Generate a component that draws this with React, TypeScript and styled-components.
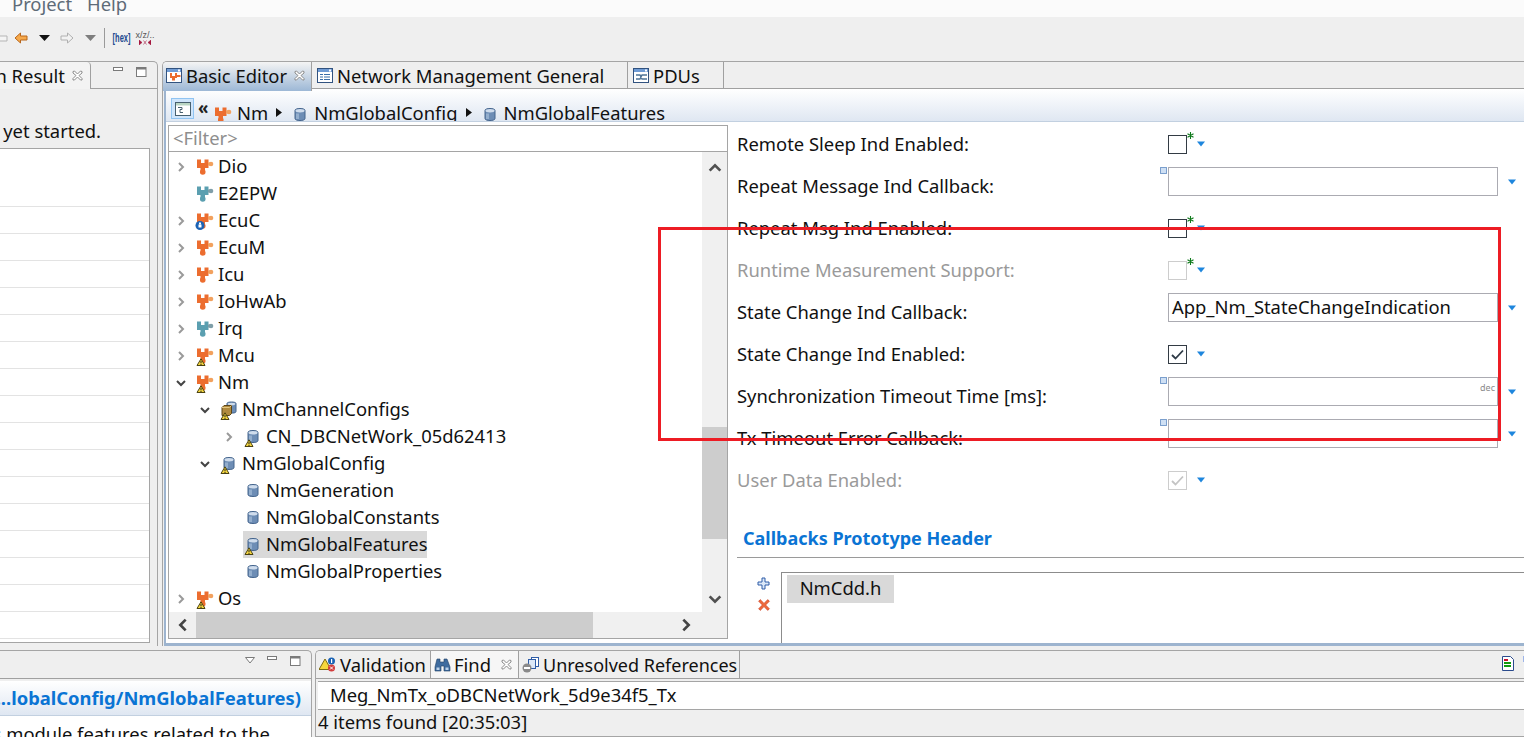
import React from "react";
import styled, { createGlobalStyle } from "styled-components";

const GlobalStyle = createGlobalStyle`
  html, body { margin: 0; padding: 0; height: 100%; overflow: hidden; }
  body { font-family: "Noto Sans", "Open Sans", sans-serif; font-size: 18.4px; color: #111; background: #efefef; }
  * { box-sizing: border-box; }
`;

type Badge = "warn" | "info" | undefined;

function WarnBadge() {
  return (
    <g>
      <path d="M6 12.800 L10 19.500 H2 Z" fill="#f5d63d" stroke="#4a4210" strokeWidth="1" strokeLinejoin="round" />
      <rect x="5.500" y="15" width="1" height="2.300" fill="#222" />
      <rect x="5.500" y="18" width="1" height="1" fill="#222" />
    </g>
  );
}

function PuzzleIcon({ tone = "orange", badge }: { tone?: "orange" | "teal"; badge?: Badge }) {
  const main = tone === "orange" ? "#ec6d2f" : "#5b9fb0";
  const side = tone === "orange" ? "#f2a15e" : "#7f9ea8";
  return (
    <svg width="20" height="20" viewBox="0 0 20 20">
      <path d="M2 2.500h4V6h3.500V2.500h4V11H10v3H5.500v-3H2z" fill={main} />
      <circle cx="7.750" cy="15" r="2.800" fill={main} />
      <rect x="13" y="5.500" width="3" height="3" fill={side} />
      <circle cx="16" cy="7" r="2.300" fill={side} />
      {badge === "warn" && <WarnBadge />}
      {badge === "info" && (
        <g>
          <circle cx="5" cy="14.500" r="4.500" fill="#1b63b5" />
          <rect x="3.500" y="13.500" width="3" height="3" fill="#fff" />
          <rect x="4" y="11.500" width="2" height="2" fill="#fff" />
        </g>
      )}
    </svg>
  );
}

function CylinderIcon({ badge }: { badge?: Badge }) {
  return (
    <svg width="20" height="20" viewBox="0 0 20 20">
      <path d="M5 5.500c0-1.500 2.500-2 5-2s5 .5 5 2v8c0 1.500-2.500 2-5 2s-5-.5-5-2z" fill="#6d8db5" stroke="#44648c" strokeWidth="1" />
      <ellipse cx="10" cy="5.800" rx="4.500" ry="1.700" fill="#cfdcec" />
      <rect x="6" y="8.500" width="3" height="5.500" fill="#93aecd" />
      {badge === "warn" && <WarnBadge />}
    </svg>
  );
}

function StackIcon() {
  return (
    <svg width="20" height="20" viewBox="0 0 20 20">
      <path d="M8 3.500c0-1 2-1.500 4.500-1.500S17 2.500 17 3.500v8c0 1-1.500 1.500-3 1.500H8z" fill="#6d8db5" stroke="#44648c" />
      <ellipse cx="12.500" cy="4" rx="3.800" ry="1.300" fill="#cfdcec" />
      <path d="M3 7.500l2-2h7.500v8l-2 2H3z" fill="#b08a3e" stroke="#5c4618" />
      <path d="M3 7.500h7.500l2-2" fill="none" stroke="#e3c781" />
      <WarnBadge />
    </svg>
  );
}

function EditorTabIcon({ variant }: { variant: "puzzle" | "list" | "pdu" }) {
  return (
    <svg width="17" height="17" viewBox="0 0 17 17">
      <rect x="0.500" y="1.500" width="15" height="14" fill="#fff" stroke="#31527f" />
      <rect x="1" y="2" width="14" height="3" fill="#6f9bd4" />
      <rect x="12" y="2.500" width="2" height="2" fill="#fff" />
      {variant === "puzzle" && (
        <path d="M4 6h2v3h3V6h2v5H9v2.500H6V11H4zM11 8h3.500v2H11z" fill="#ec6d2f" />
      )}
      {variant === "list" && (
        <path d="M3 7h3v1H3zM7 7h6v1H7zM3 9.500h3v1H3zM7 9.500h6v1H7zM3 12h3v1H3zM7 12h6v1H7z" fill="#3a6ea8" />
      )}
      {variant === "pdu" && (
        <path d="M3 8h4l2 4h5M3 12h4l2-4h5" fill="none" stroke="#4f7497" strokeWidth="1.400" />
      )}
    </svg>
  );
}

function CloseX() {
  return (
    <svg width="11" height="11" viewBox="0 0 11 11">
      <path d="M1 1.500L2.500 1 5.500 4 8.500 1 10 1.500v1.500L7 5.500l3 3V10H8.500l-3-3-3 3H1V8.500l3-3-3-2.500z" fill="#fff" stroke="#8a8a8a" />
    </svg>
  );
}

function Chevron({ dir, color = "#8a8a8a", size = 12 }: { dir: "right" | "down" | "up" | "left"; color?: string; size?: number }) {
  const d = {
    right: "M4 2l4 4-4 4",
    left: "M8 2L4 6l4 4",
    down: "M2 4l4 4 4-4",
    up: "M2 8l4-4 4 4",
  }[dir];
  return (
    <svg width={size} height={size} viewBox="0 0 12 12">
      <path d={d} fill="none" stroke={color} strokeWidth="2" />
    </svg>
  );
}

function Caret() {
  return (
    <svg width="8" height="6" viewBox="0 0 8 6">
      <path d="M0 0.500h8L4 5.500z" fill="#1e86dd" />
    </svg>
  );
}

function WindowButtons() {
  return (
    <>
      <svg width="11" height="6" viewBox="0 0 11 6"><rect x="0.500" y="0.500" width="9" height="3" fill="#fff" stroke="#7a7a7a" /></svg>
      <svg width="11" height="11" viewBox="0 0 11 11"><rect x="0.500" y="0.500" width="9.500" height="9" fill="#fff" stroke="#7a7a7a" /><rect x="0.500" y="0.500" width="9.500" height="2" fill="#7a7a7a" /></svg>
    </>
  );
}

const Page = styled.div`
  position: relative;
  width: 1524px;
  height: 737px;
  display: flex;
  flex-direction: column;
  overflow: hidden;
  background: #efefef;
`;

const MenuBar = styled.div`
  height: 17px;
  flex: none;
  background: #fbfbfb;
  display: flex;
  align-items: flex-end;
  gap: 15px;
  padding: 0 0 1px 12px;
  overflow: hidden;
  color: #5e6b78;
  line-height: 24px;
`;

const Toolbar = styled.div`
  height: 44px;
  flex: none;
  display: flex;
  align-items: center;
  padding: 0 0 2px 0;
  margin-left: -12px;
`;

const ToolSlot = styled.div<{ $w: number }>`
  width: ${(p) => p.$w}px;
  flex: none;
  display: flex;
  justify-content: center;
  align-items: center;
`;

const ToolSep = styled.div`
  width: 1px;
  height: 20px;
  background: #9a9a9a;
  margin: 0 8px 0 -1px;
`;

const HexMark = styled.span`
  font-family: "Liberation Sans", sans-serif;
  font-size: 7.500px;
  font-weight: 700;
  color: #1c4a8f;
  white-space: nowrap;
  transform: scaleY(1.600);
`;

const XzMark = styled.span`
  display: flex;
  flex-direction: column;
  align-items: center;
  gap: 1px;
  font-family: "Liberation Sans", sans-serif;
  font-size: 9px;
  line-height: 8px;
  color: #555;
  white-space: nowrap;
`;

const MainRow = styled.div`
  height: 585px;
  flex: none;
  display: flex;
  gap: 4px;
  margin-bottom: 4px;
`;

const ResultPanel = styled.section`
  width: 158px;
  flex: none;
  border-top: 1px solid #a5a5a5;
  border-right: 1px solid #a5a5a5;
  border-top-right-radius: 5px;
  display: flex;
  flex-direction: column;
  overflow: hidden;
`;

const TabRow = styled.div<{ $h?: number }>`
  height: ${(p) => p.$h ?? 27}px;
  flex: none;
  display: flex;
  align-items: stretch;
  border-bottom: 1px solid #a0a0a0;
`;

const ClippedTab = styled.div`
  width: 91px;
  flex: none;
  margin-bottom: -1px;
  display: flex;
  justify-content: flex-end;
  align-items: center;
  gap: 7px;
  padding-right: 7px;
  overflow: hidden;
  white-space: nowrap;
  border-right: 1px solid #a0a0a0;
  background: #f3f3f3;
  border-top-right-radius: 4px;
  & > * { flex: none; }
`;

const TabActions = styled.div<{ $gap?: number; $right?: number }>`
  margin-left: auto;
  display: flex;
  align-items: flex-start;
  gap: ${(p) => p.$gap ?? 12}px;
  padding: 5px ${(p) => p.$right ?? 10}px 0 0;
`;

const MenuTriangle = styled.svg`
  margin-right: -2px;
  margin-top: 1px;
`;

const ClippedLine = styled.div`
  height: 59px;
  flex: none;
  display: flex;
  justify-content: flex-end;
  align-items: flex-start;
  padding: 29px 56px 0 0;
  overflow: hidden;
  white-space: nowrap;
`;

const ResultTable = styled.div`
  flex: 1;
  width: 150px;
  margin-bottom: 3px;
  background: #fff;
  border: solid #a5a5a5;
  border-width: 1px 1px 1px 0;
  overflow: hidden;
`;

const ResultHeader = styled.div`
  height: 58px;
  border-bottom: 1px solid #e3e3e3;
`;

const ResultLine = styled.div`
  height: 27px;
  border-bottom: 1px solid #e3e3e3;
`;

const Editor = styled.section`
  flex: 1;
  min-width: 0;
  border-top: 1px solid #a5a5a5;
  border-left: 1px solid #a5a5a5;
  border-top-left-radius: 5px;
  display: flex;
  flex-direction: column;
  overflow: hidden;
`;

const EditorTab = styled.div<{ $w: number; $active?: boolean }>`
  width: ${(p) => p.$w}px;
  flex: none;
  display: flex;
  align-items: center;
  gap: 3px;
  padding-left: ${(p) => (p.$active ? 3 : 5)}px;
  padding-bottom: ${(p) => (p.$active ? 3 : 0)}px;
  margin-bottom: ${(p) => (p.$active ? -3 : 0)}px;
  position: relative;
  z-index: ${(p) => (p.$active ? 1 : 0)};
  white-space: nowrap;
  border-right: 1px solid #a0a0a0;
  background: ${(p) => (p.$active ? "linear-gradient(#f4f4f4, #9db8d6)" : "#efefef")};
  & span + svg { margin-left: 4px; }
`;

const EditorBody = styled.div`
  flex: 1;
  min-height: 0;
  border-left: 2px solid #9db4cf;
  border-bottom: 3px solid #9db4cf;
  display: flex;
  flex-direction: column;
  background: #fff;
  overflow: hidden;
  margin-left: 1px;
`;

const Breadcrumb = styled.div`
  height: 33px;
  flex: none;
  display: flex;
  align-items: flex-start;
  padding: 9px 0 0 5px;
  overflow: hidden;
  white-space: nowrap;
  background: linear-gradient(#ffffff, #dfe7f2);
  border-bottom: 1px solid #c2d0e0;
  line-height: 30px;
`;

const ViewToggle = styled.div`
  width: 23px;
  height: 21px;
  flex: none;
  display: flex;
  align-items: center;
  justify-content: center;
  background: #cfe5fb;
  border: 1px solid #90c4f2;
`;

const CrumbChevrons = styled.span`
  width: 19px;
  flex: none;
  font-size: 17px;
  line-height: 20px;
  padding-left: 4px;
  font-weight: 700;
  color: #222;
`;

const CrumbIcon = styled.span`
  width: 20px;
  height: 20px;
  margin: 5px 4px 0 0;
  flex: none;
`;

const CrumbSep = styled.span`
  width: 22px;
  flex: none;
  display: flex;
  justify-content: center;
  margin-top: 10px;
  & svg { display: block; }
`;

const Content = styled.div`
  flex: 1;
  min-height: 0;
  display: flex;
  overflow: hidden;
`;

const TreePane = styled.div`
  width: 560px;
  flex: none;
  margin: 3px 0 4px 2px;
  display: flex;
  flex-direction: column;
  border: 1px solid #a5a5a5;
`;

const FilterBox = styled.div`
  height: 26px;
  flex: none;
  padding: 0 0 2px 4px;
  display: flex;
  align-items: center;
  color: #8e8e8e;
  border-bottom: 1px solid #a5a5a5;
`;

const TreeMiddle = styled.div`
  flex: 1;
  min-height: 0;
  display: flex;
`;

const TreeList = styled.div`
  flex: 1;
  min-width: 0;
  overflow: hidden;
  padding-top: 1px;
`;

const TreeRow = styled.div<{ $level: number }>`
  height: 27px;
  display: flex;
  align-items: center;
  padding-left: ${(p) => 3 + p.$level * 24}px;
`;

const Twisty = styled.span`
  width: 23px;
  flex: none;
  display: flex;
  justify-content: flex-start;
  padding-left: 3px;
`;

const NodeLabel = styled.span<{ $selected?: boolean }>`
  height: 27px;
  display: flex;
  align-items: center;
  gap: 3px;
  white-space: nowrap;
  background: ${(p) => (p.$selected ? "#d9d9d9" : "transparent")};
  & svg { flex: none; }
  & span { margin-bottom: 2px; }
`;

const VScroll = styled.div`
  width: 25px;
  flex: none;
  background: #f0f0f0;
  display: flex;
  flex-direction: column;
  align-items: center;
  padding-top: 8px;
`;

const VThumb = styled.div`
  width: 25px;
  height: 112px;
  margin-top: 251px;
  background: #cdcdcd;
`;

const VEnd = styled.div`
  display: flex;
  margin-top: auto;
  margin-bottom: 5px;
`;

const HScroll = styled.div`
  height: 26px;
  flex: none;
  padding-right: 28px;
  background: #f0f0f0;
  display: flex;
  align-items: center;
`;

const HEnd = styled.div<{ $push?: boolean }>`
  width: 27px;
  flex: none;
  display: flex;
  justify-content: center;
  margin-left: ${(p) => (p.$push ? "auto" : "0")};
`;

const HThumb = styled.div`
  width: 397px;
  height: 100%;
  background: #cdcdcd;
`;

const Form = styled.div`
  flex: 1;
  min-width: 0;
  padding: 1px 0 0 9px;
`;

const FormRow = styled.div`
  height: 42px;
  display: flex;
  align-items: center;
  position: relative;
`;

const FieldLabel = styled.label<{ $muted?: boolean }>`
  width: 431px;
  flex: none;
  margin-bottom: 2px;
  white-space: nowrap;
  color: ${(p) => (p.$muted ? "#9a9a9a" : "#111")};
`;

const CheckBox = styled.span<{ $muted?: boolean }>`
  width: 19px;
  height: 19px;
  flex: none;
  display: flex;
  align-items: center;
  justify-content: center;
  border: 1px solid ${(p) => (p.$muted ? "#cdcdcd" : "#333b44")};
  background: #fff;
`;

const Star = styled.svg`
  position: absolute;
  left: 450px;
  top: 9px;
`;

const CheckCaret = styled.span`
  margin-left: 10px;
  display: flex;
`;

const TextField = styled.div`
  width: 330px;
  height: 29px;
  flex: none;
  margin-bottom: 9px;
  padding: 0 0 2px 3px;
  display: flex;
  align-items: center;
  justify-content: space-between;
  border: 1px solid #ababb2;
  background: #fff;
  white-space: nowrap;
`;

const DecTag = styled.span`
  align-self: flex-start;
  font-size: 9px;
  line-height: 20px;
  color: #8a8a8a;
  padding-right: 2px;
`;

const FieldCaret = styled.span`
  margin: 0 0 9px 10px;
  display: flex;
`;

const FieldMarker = styled.svg`
  position: absolute;
  left: 423px;
  top: 2px;
`;

const SectionTitle = styled.h3`
  margin: 25px 0 0;
  padding: 0 0 5px 6px;
  height: 32px;
  font-size: 18px;
  line-height: 24px;
  font-weight: 700;
  color: #0a74d4;
  border-bottom: 1px solid #9a9a9a;
`;

const HeaderList = styled.div`
  margin-top: 14px;
  display: flex;
`;

const ListTools = styled.div`
  width: 44px;
  flex: none;
  padding: 5px 0 0 10px;
  display: flex;
  flex-direction: column;
  align-items: flex-start;
  gap: 8px;
  & svg { margin-left: 10px; }
`;

const ListBox = styled.div`
  flex: 1;
  height: 90px;
  padding: 2px 5px;
  border: 1px solid #8c8c8c;
  border-right: 0;
  background: #fff;
`;

const ListItem = styled.div`
  width: 107px;
  height: 28px;
  padding-bottom: 3px;
  display: flex;
  align-items: center;
  justify-content: center;
  background: #d9d9d9;
`;

const BottomRow = styled.div`
  flex: 1;
  min-height: 0;
  display: flex;
  gap: 3px;
`;

const DescPanel = styled.section`
  width: 312px;
  flex: none;
  border-top: 1px solid #a5a5a5;
  border-right: 1px solid #a5a5a5;
  border-top-right-radius: 5px;
  display: flex;
  flex-direction: column;
  overflow: hidden;
`;

const DescTitle = styled.div`
  height: 35px;
  flex: none;
  margin-top: 2px;
  padding: 0 10px 2px 0;
  display: flex;
  justify-content: flex-end;
  align-items: center;
  overflow: hidden;
  white-space: nowrap;
  font-weight: 700;
  color: #0a74d4;
  background: linear-gradient(#ffffff, #dfe7f2);
  border-bottom: 1px solid #c2d0e0;
`;

const DescText = styled.div`
  flex: 1;
  display: flex;
  justify-content: flex-end;
  padding: 5px 41px 0 0;
  overflow: hidden;
  white-space: nowrap;
  background: #fff;
`;

const FindPanel = styled.section`
  flex: 1;
  min-width: 0;
  border-top: 1px solid #a5a5a5;
  border-left: 1px solid #a5a5a5;
  border-top-left-radius: 5px;
  display: flex;
  flex-direction: column;
  overflow: hidden;
`;

const ViewTab = styled.div<{ $w: number; $active?: boolean; $size?: number }>`
  width: ${(p) => p.$w}px;
  flex: none;
  display: flex;
  align-items: center;
  gap: 3px;
  padding-left: 3px;
  white-space: nowrap;
  font-size: ${(p) => p.$size ?? 18.4}px;
  border-right: 1px solid #a0a0a0;
  background: ${(p) => (p.$active ? "#f6f6f6" : "#efefef")};
  & span + svg { margin-left: 7px; }
`;

const SearchText = styled.div`
  height: 29px;
  flex: none;
  margin: 2px 0 0 2px;
  padding: 0 0 3px 12px;
  display: flex;
  align-items: center;
  background: #fff;
  border-top: 1px solid #a5a5a5;
  border-bottom: 1px solid #a5a5a5;
`;

const FoundText = styled.div`
  height: 27px;
  flex: none;
  padding: 0 0 3px 2px;
  display: flex;
  align-items: center;
  border-bottom: 1px solid #a5a5a5;
`;

const RedFrame = styled.div`
  position: absolute;
  left: 658px;
  top: 227px;
  width: 843px;
  height: 214px;
  border: 3px solid #ed1c24;
  pointer-events: none;
`;

type Node = {
  label: string;
  level: number;
  twisty?: "right" | "down";
  icon: React.ReactNode;
  selected?: boolean;
};

const nodes: Node[] = [
  { label: "Dio", level: 0, twisty: "right", icon: <PuzzleIcon /> },
  { label: "E2EPW", level: 0, icon: <PuzzleIcon tone="teal" /> },
  { label: "EcuC", level: 0, twisty: "right", icon: <PuzzleIcon badge="info" /> },
  { label: "EcuM", level: 0, twisty: "right", icon: <PuzzleIcon /> },
  { label: "Icu", level: 0, twisty: "right", icon: <PuzzleIcon /> },
  { label: "IoHwAb", level: 0, twisty: "right", icon: <PuzzleIcon /> },
  { label: "Irq", level: 0, twisty: "right", icon: <PuzzleIcon tone="teal" /> },
  { label: "Mcu", level: 0, twisty: "right", icon: <PuzzleIcon badge="warn" /> },
  { label: "Nm", level: 0, twisty: "down", icon: <PuzzleIcon badge="warn" /> },
  { label: "NmChannelConfigs", level: 1, twisty: "down", icon: <StackIcon /> },
  { label: "CN_DBCNetWork_05d62413", level: 2, twisty: "right", icon: <CylinderIcon badge="warn" /> },
  { label: "NmGlobalConfig", level: 1, twisty: "down", icon: <CylinderIcon badge="warn" /> },
  { label: "NmGeneration", level: 2, icon: <CylinderIcon /> },
  { label: "NmGlobalConstants", level: 2, icon: <CylinderIcon /> },
  { label: "NmGlobalFeatures", level: 2, icon: <CylinderIcon badge="warn" />, selected: true },
  { label: "NmGlobalProperties", level: 2, icon: <CylinderIcon /> },
  { label: "Os", level: 0, twisty: "right", icon: <PuzzleIcon badge="warn" /> },
];

type Field = {
  label: string;
  kind: "check" | "text";
  muted?: boolean;
  checked?: boolean;
  star?: boolean;
  value?: string;
  dec?: boolean;
};

const fields: Field[] = [
  { label: "Remote Sleep Ind Enabled:", kind: "check", star: true },
  { label: "Repeat Message Ind Callback:", kind: "text" },
  { label: "Repeat Msg Ind Enabled:", kind: "check", star: true },
  { label: "Runtime Measurement Support:", kind: "check", star: true, muted: true },
  { label: "State Change Ind Callback:", kind: "text", value: "App_Nm_StateChangeIndication" },
  { label: "State Change Ind Enabled:", kind: "check", checked: true },
  { label: "Synchronization Timeout Time [ms]:", kind: "text", dec: true },
  { label: "Tx Timeout Error Callback:", kind: "text" },
  { label: "User Data Enabled:", kind: "check", checked: true, muted: true },
];

function Marker() {
  return (
    <FieldMarker width="7" height="7" viewBox="0 0 7 7">
      <rect x="0.500" y="0.500" width="6" height="6" fill="#cfe0f4" stroke="#0f4fa0" strokeDasharray="1 1" />
    </FieldMarker>
  );
}

function FieldRow({ field }: { field: Field }) {
  return (
    <FormRow>
      <FieldLabel $muted={field.muted}>{field.label}</FieldLabel>
      {field.kind === "check" ? (
        <>
          <CheckBox $muted={field.muted}>
            {field.checked && (
              <svg width="13" height="11" viewBox="0 0 13 11">
                <path d="M1 6l3.500 3.500L12 1.500" fill="none" stroke={field.muted ? "#c4c4c4" : "#2f3b47"} strokeWidth="1.800" />
              </svg>
            )}
          </CheckBox>
          {field.star && (
            <Star width="7" height="7" viewBox="0 0 7 7">
              <path d="M3.500 0v7M0.500 1.700l6 3.600M6.500 1.700l-6 3.600" stroke="#0f7a1b" strokeWidth="1.100" />
            </Star>
          )}
          <CheckCaret><Caret /></CheckCaret>
        </>
      ) : (
        <>
          {!field.value && <Marker />}
          <TextField>
            {field.value}
            {field.dec && <><span /><DecTag>dec</DecTag></>}
          </TextField>
          <FieldCaret><Caret /></FieldCaret>
        </>
      )}
    </FormRow>
  );
}

export default function App() {
  const resultLines = Array.from({ length: 16 }, (_, i) => i);
  return (
    <Page>
      <GlobalStyle />
      <MenuBar>
        <span>Project</span>
        <span>Help</span>
      </MenuBar>
      <Toolbar>
        <ToolSlot $w={24}>
          <svg width="16" height="13" viewBox="0 0 16 13"><path d="M1 6.500L7 1v3h8v5H7v3z" fill="#f4f4f4" stroke="#b5b5b5" /></svg>
        </ToolSlot>
        <ToolSlot $w={1} />
        <ToolSlot $w={16}>
          <svg width="14" height="12" viewBox="0 0 14 12"><path d="M1 6l5.500-5v3H13v4H6.500v3z" fill="#f6a94b" stroke="#b9661a" /></svg>
        </ToolSlot>
        <ToolSlot $w={30}>
          <svg width="11" height="6" viewBox="0 0 11 6"><path d="M0 0h11L5.500 6z" fill="#111" /></svg>
        </ToolSlot>
        <ToolSlot $w={16}>
          <svg width="14" height="12" viewBox="0 0 14 12"><path d="M13 6L7.500 1v3H1v4h6.500v3z" fill="#f2f2f2" stroke="#b0b0b0" /></svg>
        </ToolSlot>
        <ToolSlot $w={30}>
          <svg width="11" height="6" viewBox="0 0 11 6"><path d="M0 0h11L5.500 6z" fill="#7e7e7e" /></svg>
        </ToolSlot>
        <ToolSep />
        <ToolSlot $w={17}><HexMark>[hex]</HexMark></ToolSlot>
        <ToolSlot $w={6} />
        <ToolSlot $w={18}>
          <XzMark>
            x/z/..
            <svg width="12" height="5" viewBox="0 0 12 5">
              <path d="M0 0l3 2.500L0 5zM12 0L9 2.500 12 5zM4.500 0.500l3 4M7.500 0.500l-3 4" fill="#a5173f" stroke="#a5173f" strokeWidth="0.600" />
            </svg>
          </XzMark>
        </ToolSlot>
      </Toolbar>

      <MainRow>
        <ResultPanel>
          <TabRow>
            <ClippedTab>
              <span>Validation Result</span>
              <CloseX />
            </ClippedTab>
            <TabActions $gap={12}><WindowButtons /></TabActions>
          </TabRow>
          <ClippedLine>Not yet started.</ClippedLine>
          <ResultTable>
            <ResultHeader />
            {resultLines.map((i) => <ResultLine key={i} />)}
          </ResultTable>
        </ResultPanel>

        <Editor>
          <TabRow>
            <EditorTab $w={149} $active>
              <EditorTabIcon variant="puzzle" />
              <span>Basic Editor</span>
              <CloseX />
            </EditorTab>
            <EditorTab $w={316}>
              <EditorTabIcon variant="list" />
              <span>Network Management General</span>
            </EditorTab>
            <EditorTab $w={96}>
              <EditorTabIcon variant="pdu" />
              <span>PDUs</span>
            </EditorTab>
          </TabRow>
          <EditorBody>
            <Breadcrumb>
              <ViewToggle>
                <svg width="16" height="14" viewBox="0 0 16 14">
                  <rect x="0.500" y="0.500" width="15" height="13" fill="#fff" stroke="#48606f" />
                  <rect x="1" y="1" width="14" height="2.500" fill="#b9d5c3" />
                  <path d="M3 5.500h4v2H5v3h3" fill="none" stroke="#48606f" />
                </svg>
              </ViewToggle>
              <CrumbChevrons>«</CrumbChevrons>
              <CrumbIcon><PuzzleIcon /></CrumbIcon>
              <span>Nm</span>
              <CrumbSep><svg width="6" height="9" viewBox="0 0 6 9"><path d="M0 0l6 4.500L0 9z" fill="#111" /></svg></CrumbSep>
              <CrumbIcon><CylinderIcon /></CrumbIcon>
              <span>NmGlobalConfig</span>
              <CrumbSep><svg width="6" height="9" viewBox="0 0 6 9"><path d="M0 0l6 4.500L0 9z" fill="#111" /></svg></CrumbSep>
              <CrumbIcon><CylinderIcon /></CrumbIcon>
              <span>NmGlobalFeatures</span>
            </Breadcrumb>
            <Content>
              <TreePane>
                <FilterBox>&lt;Filter&gt;</FilterBox>
                <TreeMiddle>
                  <TreeList>
                    {nodes.map((n) => (
                      <TreeRow key={n.label} $level={n.level}>
                        <Twisty>
                          {n.twisty && (
                            <Chevron dir={n.twisty} color={n.twisty === "down" ? "#444" : "#9a9a9a"} />
                          )}
                        </Twisty>
                        <NodeLabel $selected={n.selected}>
                          {n.icon}
                          <span>{n.label}</span>
                        </NodeLabel>
                      </TreeRow>
                    ))}
                  </TreeList>
                  <VScroll>
                    <Chevron dir="up" color="#505050" size={16} />
                    <VThumb />
                    <VEnd><Chevron dir="down" color="#505050" size={16} /></VEnd>
                  </VScroll>
                </TreeMiddle>
                <HScroll>
                  <HEnd><Chevron dir="left" color="#444" size={16} /></HEnd>
                  <HThumb />
                  <HEnd $push><Chevron dir="right" color="#444" size={16} /></HEnd>
                </HScroll>
              </TreePane>
              <Form>
                {fields.map((f) => <FieldRow key={f.label} field={f} />)}
                <SectionTitle>Callbacks Prototype Header</SectionTitle>
                <HeaderList>
                  <ListTools>
                    <svg width="13" height="13" viewBox="0 0 13 13"><path d="M5 1h3v4h4v3H8v4H5V8H1V5h4z" fill="#dbe8f8" stroke="#2f5da8" /></svg>
                    <svg width="14" height="14" viewBox="0 0 13 13"><path d="M1.500 3L3 1.500l3.500 3.500L10 1.500 11.500 3 8 6.500l3.500 3.500-1.500 1.500L6.500 8 3 11.500 1.500 10 5 6.500z" fill="#ef6a3c" stroke="#c73a1f" strokeWidth="0.600" /></svg>
                  </ListTools>
                  <ListBox><ListItem>NmCdd.h</ListItem></ListBox>
                </HeaderList>
              </Form>
            </Content>
          </EditorBody>
        </Editor>
      </MainRow>

      <BottomRow>
        <DescPanel>
          <TabRow $h={28}>
            <TabActions $gap={12}>
              <MenuTriangle width="12" height="7" viewBox="0 0 12 7"><path d="M0.500 0.500h9L5 6z" fill="#fff" stroke="#7a7a7a" /></MenuTriangle>
              <WindowButtons />
            </TabActions>
          </TabRow>
          <DescTitle>...lobalConfig/NmGlobalFeatures)</DescTitle>
          <DescText>This module features related to the</DescText>
        </DescPanel>
        <FindPanel>
          <TabRow $h={28}>
            <ViewTab $w={115}>
              <svg width="18" height="17" viewBox="0 0 18 17">
                <path d="M6 3l6 10.500H0z" fill="#f5d63d" stroke="#7d6b12" />
                <circle cx="12.500" cy="5" r="3.500" fill="#1b63b5" />
                <rect x="12" y="3" width="1.200" height="4" fill="#fff" />
                <circle cx="12.500" cy="12" r="3.500" fill="#d23b3b" />
                <path d="M11 10.500l3 3M14 10.500l-3 3" stroke="#fff" strokeWidth="1" />
              </svg>
              <span>Validation</span>
            </ViewTab>
            <ViewTab $w={88} $active>
              <svg width="17" height="14" viewBox="0 0 17 14">
                <path d="M3 1h3v3h4V1h3l3 8v4h-6V8H7v5H1V9z" fill="#3f6c9f" stroke="#1f3f66" strokeWidth="0.600" />
                <rect x="2.500" y="9.500" width="3" height="2.500" fill="#bcd2ea" />
                <rect x="11.500" y="9.500" width="3" height="2.500" fill="#bcd2ea" />
              </svg>
              <span>Find</span>
              <CloseX />
            </ViewTab>
            <ViewTab $w={221} $size={18}>
              <svg width="18" height="16" viewBox="0 0 18 16">
                <rect x="9.500" y="0.500" width="7" height="9" fill="#fff" stroke="#2f5da8" />
                <rect x="6.500" y="2.500" width="7" height="9" fill="#dbe8f8" stroke="#2f5da8" />
                <circle cx="5" cy="11" r="4.500" fill="#8a8a8a" />
                <rect x="2" y="10" width="6" height="2" fill="#fff" />
              </svg>
              <span>Unresolved References</span>
            </ViewTab>
            <TabActions $gap={9} $right={0}>
              <svg width="12" height="15" viewBox="0 0 12 15">
                <path d="M0.500 0.500h8l3 3v11h-11z" fill="#fff" stroke="#2a4a8c" />
                <rect x="2" y="3" width="4" height="2" fill="#c8102e" />
                <rect x="2" y="6" width="7" height="2" fill="#109a10" />
                <rect x="2" y="9" width="7" height="2" fill="#109a10" />
              </svg>
              <svg width="1" height="6" viewBox="0 0 1 6"><rect width="1" height="6" fill="#9db4e8" /></svg>
            </TabActions>
          </TabRow>
          <SearchText>Meg_NmTx_oDBCNetWork_5d9e34f5_Tx</SearchText>
          <FoundText>4 items found [20:35:03]</FoundText>
        </FindPanel>
      </BottomRow>
      <RedFrame />
    </Page>
  );
}
